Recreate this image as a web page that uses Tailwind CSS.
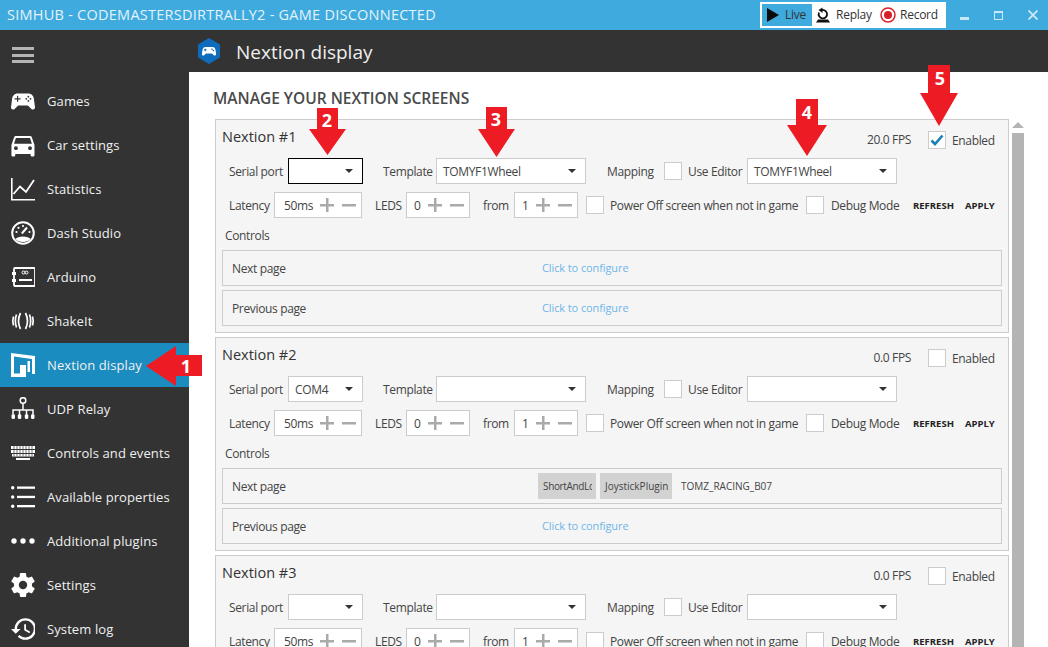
<!DOCTYPE html>
<html lang="en">
<head>
    <meta charset="UTF-8">
    <meta name="viewport" content="width=device-width, initial-scale=1.0">
    <title>SimHub - Nextion display</title>
    <script src="https://cdn.jsdelivr.net/npm/@tailwindcss/browser@4"></script>
</head>
<body class="bg-white font-['Open_Sans',sans-serif] text-[12px] text-[#444]">
<div class="relative flex h-[647px] w-[1048px] flex-col overflow-hidden">

    <!-- title bar -->
    <div class="flex h-[30px] shrink-0 items-center bg-[#3faade] text-[#e3f3fb]">
        <span class="ml-[7px] whitespace-nowrap text-[14.500px] tracking-[0.25px]">SIMHUB - CODEMASTERSDIRTRALLY2 - GAME DISCONNECTED</span>
        <div class="ml-auto flex h-[26px] w-[186px] items-center bg-white px-[2px] text-[12px] tracking-[-0.25px] text-[#333]">
            <div class="flex h-[22px] w-[50px] items-center bg-[#3faade]">
                <svg class="ml-[5px]" width="12" height="14" viewBox="0 0 12 14"><path d="M0 0L12 7L0 14Z" fill="#0b0b0b"/></svg>
                <span class="ml-[6px]">Live</span>
            </div>
            <svg class="ml-[3px]" width="16" height="16" viewBox="0 0 16 16"><path d="M4 5.500A4.200 4.200 0 1 0 6 3.400" fill="none" stroke="#111" stroke-width="1.800"/><path d="M7.500 0.500V6L3.500 3Z" fill="#111"/><path d="M1 15.500L3 12.500H13L15 15.500Z" fill="#111"/></svg>
            <span class="ml-[5px] w-[35px]">Replay</span>
            <svg class="ml-[9px]" width="16" height="16" viewBox="0 0 16 16"><circle cx="8" cy="8" r="7" fill="none" stroke="#d9202a" stroke-width="1.500"/><circle cx="8" cy="8" r="4" fill="#d9202a"/></svg>
            <span class="ml-[4px]">Record</span>
        </div>
        <div class="flex w-[102px] shrink-0 items-center text-[#cbe8f7]">
            <span class="ml-[14px] mt-[7px] h-[3px] w-[9px] bg-[#cbe8f7]"></span>
            <span class="ml-[25px] h-[9px] w-[9px] border border-t-2 border-[#cbe8f7]"></span>
            <svg class="ml-[25px]" width="10" height="10" viewBox="0 0 10 10"><path d="M0.500 0.500L9.500 9.500M9.500 0.500L0.500 9.500" stroke="#cbe8f7" stroke-width="1.800"/></svg>
        </div>
    </div>

    <div class="flex min-h-0 flex-1">
        <!-- sidebar -->
        <aside class="w-[189px] shrink-0 bg-[#333] text-[13px] tracking-[0.1px] text-[#f0f0f0]">
            <div class="flex h-[49px] items-start pl-[12px] pt-[17px]">
                <div class="flex w-[22px] flex-col gap-[3.500px]">
                    <span class="h-[3px] bg-[#b5b5b5]"></span>
                    <span class="h-[3px] bg-[#b5b5b5]"></span>
                    <span class="h-[3px] bg-[#b5b5b5]"></span>
                </div>
            </div>
            <nav id="nav"></nav>
        </aside>

        <div class="flex min-w-0 flex-1 flex-col">
            <!-- page header -->
            <header class="flex h-[42px] shrink-0 items-center bg-[#333] pl-[9px] text-[#eee]">
                <svg width="22" height="26" viewBox="0 0 22 26">
                    <path d="M11 0L22 6.500V19.500L11 26L0 19.500V6.500Z" fill="#0f6cbd"/>
                    <path d="M7.500 9H14.500C16.400 9 17.400 10.600 17.600 12.500L18.100 16.200C18.200 17.600 16.600 18 15.800 17.200L14 15.400H8L6.200 17.200C5.400 18 3.800 17.600 3.900 16.200L4.400 12.500C4.600 10.600 5.600 9 7.500 9Z" fill="#fff"/>
                    <path d="M7.200 10.600V13.200M5.900 11.900H8.500" stroke="#0f6cbd" stroke-width="1"/>
                    <circle cx="14" cy="11.200" r=".8" fill="#0f6cbd"/><circle cx="15.400" cy="12.600" r=".8" fill="#0f6cbd"/>
                </svg>
                <span class="ml-[16px] mt-[2px] whitespace-nowrap text-[19px] leading-none">Nextion display</span>
            </header>

            <!-- content -->
            <main class="flex min-h-0 flex-1 overflow-hidden bg-white">
                <div class="w-[820px] shrink-0">
                    <h2 class="ml-[24px] mt-[16px] h-[31px] whitespace-nowrap text-[15.500px] leading-[20px] font-semibold text-[#4a4a4a]">MANAGE YOUR NEXTION SCREENS</h2>
                    <div id="panels" class="ml-[26px] flex w-[794px] flex-col gap-[4px] tracking-[-0.35px]"></div>
                </div>
                <!-- scrollbar -->
                <div class="ml-[3px] mt-[50px] flex w-[12px] shrink-0 flex-col items-center">
                    <span class="h-0 w-0 border-x-[6px] border-b-[6px] border-x-transparent border-b-[#b4b4b4]"></span>
                    <span class="mt-[5px] h-[600px] w-full bg-[#b4b4b4]"></span>
                </div>
            </main>
        </div>
    </div>

    <!-- red annotation arrows -->
    <svg class="pointer-events-none absolute inset-0" width="1048" height="647" viewBox="0 0 1048 647">
        <g fill="#ed1c24">
            <path d="M202 355V376H176V386L146 366L176 346V355Z"/>
            <path d="M317 108H338V129H346L327.500 155L309 129H317Z"/>
            <path d="M486 107H507V129H515L496.500 157L478 129H486Z"/>
            <path d="M796 99H818V125H827L807 156L787 125H796Z"/>
            <path d="M928 65H950V93H958L939 126L920 93H928Z"/>
        </g>
        <g fill="#fff" font-family="'Open Sans',sans-serif" font-size="18" font-weight="700" text-anchor="middle">
            <text x="186" y="373">1</text>
            <text x="327" y="127">2</text>
            <text x="496" y="126">3</text>
            <text x="807" y="119">4</text>
            <text x="940" y="85">5</text>
        </g>
    </svg>
</div>

<script>
    // sidebar entries, icons are 24x24 boxes
    const icons = {
        games: '<path fill="#fff" transform="translate(-2.400 -2.800) scale(1.200)" d="M7.970,16L5,19C4.670,19.300 4.230,19.500 3.750,19.500A1.750,1.750 0 0,1 2,17.750V17.500L3,10.120C3.210,7.810 5.140,6 7.500,6H16.500C18.860,6 20.790,7.810 21,10.120L22,17.500V17.750A1.750,1.750 0 0,1 20.250,19.500C19.770,19.500 19.330,19.300 19,19L16.030,16H7.970M7,8V10H5V11H7V13H8V11H10V10H8V8H7M16.500,8A0.750,0.750 0 0,0 15.750,8.750A0.750,0.750 0 0,0 16.500,9.500A0.750,0.750 0 0,0 17.250,8.750A0.750,0.750 0 0,0 16.500,8M14.750,9.750A0.750,0.750 0 0,0 14,10.500A0.750,0.750 0 0,0 14.750,11.250A0.750,0.750 0 0,0 15.500,10.500A0.750,0.750 0 0,0 14.750,9.750M18.250,9.750A0.750,0.750 0 0,0 17.500,10.500A0.750,0.750 0 0,0 18.250,11.250A0.750,0.750 0 0,0 19,10.500A0.750,0.750 0 0,0 18.250,9.750M16.500,11.500A0.750,0.750 0 0,0 15.750,12.250A0.750,0.750 0 0,0 16.500,13A0.750,0.750 0 0,0 17.250,12.250A0.750,0.750 0 0,0 16.500,11.500Z"/>',
        car: '<path fill="#fff" d="M5,11L6.500,6.500H17.500L19,11M17.500,16A1.500,1.500 0 0,1 16,14.500A1.500,1.500 0 0,1 17.500,13A1.500,1.500 0 0,1 19,14.500A1.500,1.500 0 0,1 17.500,16M6.500,16A1.500,1.500 0 0,1 5,14.500A1.500,1.500 0 0,1 6.500,13A1.500,1.500 0 0,1 8,14.500A1.500,1.500 0 0,1 6.500,16M18.920,6C18.720,5.420 18.160,5 17.500,5H6.500C5.840,5 5.280,5.420 5.080,6L3,12V20A1,1 0 0,0 4,21H5A1,1 0 0,0 6,20V19H18V20A1,1 0 0,0 19,21H20A1,1 0 0,0 21,20V12L18.920,6Z" transform="translate(-3.400 -3.400) scale(1.280)"/>',
        stats: '<path fill="none" stroke="#fff" stroke-width="1.600" d="M.8 1V22.800H24"/><path fill="none" stroke="#fff" stroke-width="1.800" d="M2.500 17L9 9.500L15 15L23 3"/>',
        dash: '<circle cx="12" cy="12" r="10.800" fill="none" stroke="#fff" stroke-width="2"/><path fill="#fff" d="M4.500 18C6.500 14.500 17.500 14.500 19.500 18C17 22 7 22 4.500 18Z"/><path stroke="#fff" stroke-width="2" d="M10.800 12.500L16 6.500"/><g fill="#fff"><circle cx="5.500" cy="11" r="1.100"/><circle cx="7.500" cy="6.800" r="1.100"/><circle cx="12" cy="5" r="1.100"/><circle cx="18.500" cy="11" r="1.100"/></g>',
        arduino: '<rect x="3" y="3" width="21" height="18" rx="1" fill="none" stroke="#fff" stroke-width="1.800"/><path fill="#fff" d="M1 7H5V10H1ZM1 14H5V17H1ZM8 14H21V16H8Z"/><path fill="none" stroke="#fff" d="M11 7.500a1.500 1.500 0 1 1 3 0a1.500 1.500 0 1 1-3 0M14 7.500a1.500 1.500 0 1 1 3 0a1.500 1.500 0 1 1-3 0"/>',
        shake: '<g fill="none" stroke="#fff" stroke-width="1.700"><path d="M2.500 7.500Q1 12 2.500 16.500M5.500 5.500Q3.200 12 5.500 18.500M9.500 4Q5.500 12 9.500 20M14.500 4Q18.500 12 14.500 20M18.500 5.500Q20.800 12 18.500 18.500M21.500 7.500Q23 12 21.500 16.500"/></g>',
        nextion: '<g fill="#fff"><path d="M0 0L24 3V6.500L3 3.500V23H0Z"/><path d="M0 20.500H9V12H15V24H0Z"/><path d="M21 5H24V21H21Z"/><path d="M16.500 8H19V19H16.500Z"/></g>',
        udp: '<circle cx="12" cy="3.500" r="2.800" fill="none" stroke="#fff" stroke-width="1.500"/><path fill="none" stroke="#fff" stroke-width="1.500" d="M12 6V13M2 17V13H22V17M8.500 17V13M15.500 17V13"/><g fill="#fff"><rect x=".5" y="17" width="3.500" height="5" rx="1.500"/><rect x="6.800" y="17" width="3.500" height="5" rx="1.500"/><rect x="13.800" y="17" width="3.500" height="5" rx="1.500"/><rect x="20" y="17" width="3.500" height="5" rx="1.500"/></g>',
        keys: '<path fill="#fff" d="M0 5H24V8H0ZM0 9H24V12H0ZM1 13H23V15.500H1ZM5 17H19V19H5Z"/><path stroke="#333" stroke-width=".7" d="M3 5V15.500M6 5V15.500M9 5V15.500M12 5V15.500M15 5V15.500M18 5V15.500M21 5V15.500"/>',
        list: '<g fill="#fff"><circle cx="1.700" cy="2.700" r="1.700"/><circle cx="1.700" cy="12" r="1.700"/><circle cx="1.700" cy="21.300" r="1.700"/><rect x="6" y="1.500" width="18" height="2.300"/><rect x="6" y="10.800" width="18" height="2.300"/><rect x="6" y="20" width="18" height="2.300"/></g>',
        dots: '<g fill="#fff"><circle cx="3" cy="12" r="2.700"/><circle cx="12" cy="12" r="2.700"/><circle cx="21" cy="12" r="2.700"/></g>',
        gear: '<path fill="#fff" transform="translate(-2.400 -2.400) scale(1.200)" d="M12,15.500A3.500,3.500 0 0,1 8.500,12A3.500,3.500 0 0,1 12,8.500A3.500,3.500 0 0,1 15.500,12A3.500,3.500 0 0,1 12,15.500M19.430,12.970C19.470,12.650 19.500,12.330 19.500,12C19.500,11.670 19.470,11.340 19.430,11L21.540,9.370C21.730,9.220 21.780,8.950 21.660,8.730L19.660,5.270C19.540,5.050 19.270,4.960 19.050,5.050L16.560,6.050C16.040,5.660 15.500,5.320 14.870,5.070L14.500,2.420C14.460,2.180 14.250,2 14,2H10C9.750,2 9.540,2.180 9.500,2.420L9.130,5.070C8.500,5.320 7.960,5.660 7.440,6.050L4.950,5.050C4.730,4.960 4.460,5.050 4.340,5.270L2.340,8.730C2.210,8.950 2.270,9.220 2.460,9.370L4.570,11C4.530,11.340 4.500,11.670 4.500,12C4.500,12.330 4.530,12.650 4.570,12.970L2.460,14.630C2.270,14.780 2.210,15.050 2.340,15.270L4.340,18.730C4.460,18.950 4.730,19.030 4.950,18.950L7.440,17.940C7.960,18.340 8.500,18.680 9.130,18.930L9.500,21.580C9.540,21.820 9.750,22 10,22H14C14.250,22 14.460,21.820 14.500,21.580L14.870,18.930C15.500,18.670 16.040,18.340 16.560,17.940L19.050,18.950C19.270,19.030 19.540,18.950 19.660,18.730L21.660,15.270C21.780,15.050 21.730,14.780 21.540,14.630L19.430,12.970Z"/>',
        history: '<path fill="#fff" transform="translate(-1.200 -2.400) scale(1.200)" d="M13.500,8H12V13L16.280,15.540L17,14.330L13.500,12.250V8M13,3A9,9 0 0,0 4,12H1L4.960,16.030L9,12H6A7,7 0 0,1 13,5A7,7 0 0,1 20,12A7,7 0 0,1 13,19C11.070,19 9.320,18.210 8.060,16.940L6.640,18.360C8.270,20 10.500,21 13,21A9,9 0 0,0 22,12A9,9 0 0,0 13,3"/>'
    };

    const navItems = [
        ['games', 'Games'], ['car', 'Car settings'], ['stats', 'Statistics'], ['dash', 'Dash Studio'],
        ['arduino', 'Arduino'], ['shake', 'ShakeIt'], ['nextion', 'Nextion display'], ['udp', 'UDP Relay'],
        ['keys', 'Controls and events'], ['list', 'Available properties'], ['dots', 'Additional plugins'],
        ['gear', 'Settings'], ['history', 'System log']
    ];

    document.getElementById('nav').innerHTML = navItems.map(([icon, label]) => `
        <div class="flex h-[44px] items-center pl-[11px] ${icon === 'nextion' ? 'bg-[#1a8cbf]' : ''}">
            <svg class="shrink-0" width="24" height="24" viewBox="0 0 24 24">${icons[icon]}</svg>
            <span class="ml-[12px] mt-[2px] whitespace-nowrap">${label}</span>
        </div>`).join('');

    // small form parts
    const caret = '<span class="ml-auto mr-[9px] h-0 w-0 shrink-0 border-x-[4px] border-t-[4px] border-x-transparent border-t-[#333]"></span>';
    const combo = (width, value, focused) => `
        <div class="flex h-[26px] ${width} shrink-0 items-center border bg-white pl-[6px] ${focused ? 'border-black' : 'border-[#ccc]'}">
            <span class="mt-[2px] whitespace-nowrap text-[#444]">${value}</span>${caret}
        </div>`;
    const check = (checked) => `
        <span class="flex h-[18px] w-[18px] shrink-0 items-center justify-center border border-[#ccc] bg-white">
            ${checked ? '<svg width="14" height="12" viewBox="0 0 14 12"><path d="M1.500 6.500L5 10L12.500 1.500" fill="none" stroke="#1a7fb5" stroke-width="2.600"/></svg>' : ''}
        </span>`;
    const stepper = (width, value) => `
        <div class="flex h-[26px] ${width} shrink-0 items-center border border-[#ccc] bg-white pl-[7px] pr-[5px]">
            <span class="mt-[2px] whitespace-nowrap ${value === '50ms' ? 'ml-[2px]' : ''}">${value}</span>
            <svg class="ml-auto" width="36" height="14" viewBox="0 0 36 14"><path fill="#aaa" d="M6 0H8.500V14H6ZM0 6H14V8.500H0ZM22 6H36V8.500H22Z"/></svg>
        </div>`;
    const label = (classes, text) => `<span class="${classes} mt-[2px] shrink-0 whitespace-nowrap">${text}</span>`;
    const link = '<span class="ml-[4px] text-[11px] tracking-[-0.1px] text-[#6fb6e8]">Click to configure</span>';
    const controlRow = (name, content) => `
        <div class="flex h-[36px] items-center border border-[#ccc] pl-[9px]">
            <span class="mt-[2px] w-[306px] shrink-0 whitespace-nowrap">${name}</span>${content}
        </div>`;
    const bound = `
        <span class="flex h-[26px] w-[58px] items-center bg-[#d2d2d2] pl-[5px] text-[10px]"><span class="w-[49px] overflow-hidden whitespace-nowrap">ShortAndLong</span></span>
        <span class="ml-[4px] flex h-[26px] w-[72px] items-center whitespace-nowrap bg-[#d2d2d2] pl-[5px] text-[10px] tracking-normal">JoystickPlugin</span>
        <span class="ml-[9px] whitespace-nowrap text-[10px] tracking-normal">TOMZ_RACING_B07</span>`;

    const panels = [
        { fps: '20.0 FPS', enabled: true, port: '', focus: true, template: 'TOMYF1Wheel', editor: 'TOMYF1Wheel', next: link },
        { fps: '0.0 FPS', enabled: false, port: 'COM4', focus: false, template: '', editor: '', next: bound },
        { fps: '0.0 FPS', enabled: false, port: '', focus: false, template: '', editor: '', next: link }
    ];

    document.getElementById('panels').innerHTML = panels.map((p, i) => `
        <section class="h-[214px] shrink-0 border border-[#ccc] bg-[#f5f5f5] px-[6px]">
            <div class="flex h-[38px] items-start pr-[8px]">
                <span class="mt-[7px] whitespace-nowrap text-[14.500px] leading-[20px] tracking-normal text-[#333]">Nextion #${i + 1}</span>
                <span class="ml-auto mt-[11px] whitespace-nowrap leading-[18px]">${p.fps}</span>
                <div class="ml-[17px] mt-[10px] flex items-center">${check(p.enabled)}${label('ml-[6px] w-[42px]', 'Enabled')}</div>
            </div>
            <div class="flex h-[26px] items-center pl-[7px]">
                ${label('w-[59px]', 'Serial port')}${combo('w-[75px]', p.port, p.focus)}
                ${label('ml-[20px] w-[53px]', 'Template')}${combo('w-[150px]', p.template)}
                ${label('ml-[21px] w-[57px]', 'Mapping')}${check(false)}
                ${label('ml-[6px] w-[59px]', 'Use Editor')}${combo('w-[150px]', p.editor)}
            </div>
            <div class="mt-[8px] flex h-[26px] items-center pl-[7px]">
                ${label('w-[45px]', 'Latency')}${stepper('w-[88px]', '50ms')}
                ${label('ml-[13px] w-[31px]', 'LEDS')}${stepper('w-[64px]', '0')}
                ${label('ml-[13px] w-[31px]', 'from')}${stepper('w-[64px]', '1')}
                <span class="ml-[8px]">${check(false)}</span>${label('ml-[6px] w-[196px]', 'Power Off screen when not in game')}
                ${check(false)}${label('ml-[7px] w-[82px]', 'Debug Mode')}
                ${label('w-[52px] text-[9.500px] tracking-normal font-bold text-[#222]', 'REFRESH')}${label('text-[9.500px] tracking-normal font-bold text-[#222]', 'APPLY')}
            </div>
            <div class="flex h-[32px] items-center pl-[3px] pt-[3px]">Controls</div>
            ${controlRow('Next page', p.next)}
            <div class="mt-[4px]">${controlRow('Previous page', link)}</div>
        </section>`).join('');
</script>
</body>
</html>
